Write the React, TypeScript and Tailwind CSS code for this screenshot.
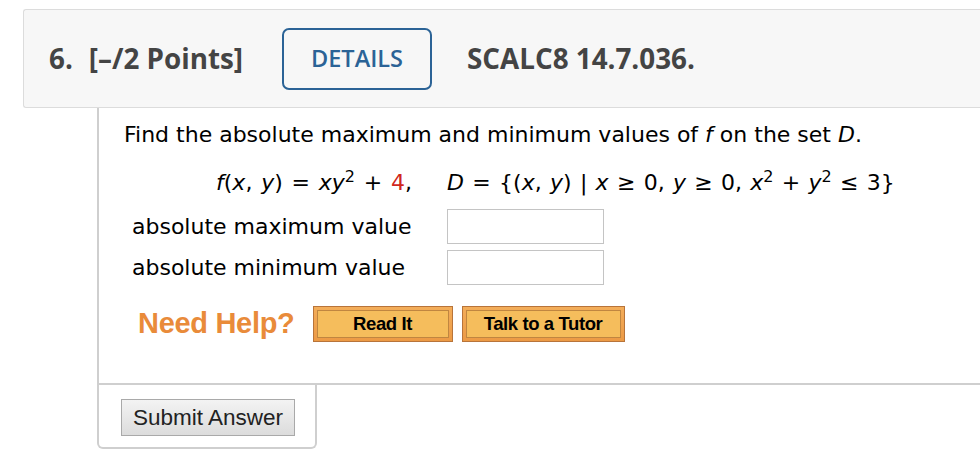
import React from "react";

const verdana = { fontFamily: '"DejaVu Sans", Verdana, sans-serif' };

function OrangeButton({ label, width }: { label: string; width: string }) {
  return (
    <div className={`h-[36px] ${width} border border-[#b8743a] bg-gradient-to-b from-[#f3ad5a] to-[#ec9a45] p-[3px]`}>
      <div className="flex h-full w-full items-center justify-center border border-[#c08640] bg-[#f5bd5c] font-['Liberation_Sans',Arial,sans-serif] text-[18.5px] font-bold tracking-[-0.4px] text-black">
        {label}
      </div>
    </div>
  );
}

export default function App() {
  return (
    <div className="h-[460px] w-[980px] overflow-hidden bg-white">
      {/* Header */}
      <div className="ml-[23px] mt-[9px] flex h-[99px] items-center rounded-l-[3px] border border-r-0 border-[#dcdcdc] bg-[#f7f7f7] pl-[25px] font-['Open_Sans',sans-serif] font-bold text-[#444]">
        <span className="text-[27.8px]">6.</span>
        <span className="ml-[16px] text-[27.8px]">[–/2 Points]</span>
        <div className="ml-[39px] flex h-[62px] w-[150px] items-center justify-center rounded-[7px] border-2 border-[#2b6396] text-[23.5px] font-semibold text-[#2b6396]">
          DETAILS
        </div>
        <span className="ml-[35px] text-[27.8px]">SCALC8 14.7.036.</span>
      </div>

      {/* Content */}
      <div className="ml-[97px]">
        <div className="h-[277px] border-b-2 border-l-2 border-[#cfcfcf] pl-[25px] pt-[13px] text-[22px] text-black" style={verdana}>
          <div className="leading-[28px]">
            Find the absolute maximum and minimum values of <i>f</i> on the set <i>D</i>.
          </div>
          <div className="mt-[20px] pl-[92px] leading-[28px] [word-spacing:1.8px]">
            <i>f</i>(<i>x</i>, <i>y</i>) = <i>xy</i>
            <sup className="text-[16px]">2</sup> + <span className="text-[#d0281c]">4</span>,
            <span className="ml-[35px] [word-spacing:1.3px]">
              <i>D</i> = {"{"}(<i>x</i>, <i>y</i>) | <i>x</i> ≥ 0, <i>y</i> ≥ 0, <i>x</i>
              <sup className="text-[16px]">2</sup> + <i>y</i>
              <sup className="text-[16px]">2</sup> ≤ 3{"}"}
            </span>
          </div>
          <div className="mt-[12px] flex flex-col gap-[6px] pl-[8px]">
            <div className="flex items-center">
              <span className="w-[315px] leading-[28px]">absolute maximum value</span>
              <div className="h-[35px] w-[157px] border border-[#c4c4c4] bg-white" />
            </div>
            <div className="flex items-center">
              <span className="w-[315px] leading-[28px]">absolute minimum value</span>
              <div className="h-[35px] w-[157px] border border-[#c4c4c4] bg-white" />
            </div>
          </div>
          <div className="mt-[17px] flex items-center pl-[14px]">
            <span className="font-['Liberation_Sans',Arial,sans-serif] text-[29px] font-bold tracking-[-0.3px] text-[#e98b3a]">
              Need Help?
            </span>
            <div className="ml-[18px]">
              <OrangeButton label="Read It" width="w-[140px]" />
            </div>
            <div className="ml-[9px]">
              <OrangeButton label="Talk to a Tutor" width="w-[163px]" />
            </div>
          </div>
        </div>
        <div className="h-[64px] w-[220px] rounded-b-[6px] border-x-2 border-b-2 border-[#cfcfcf] pl-[22px] pt-[14px]">
          <div className="flex h-[37px] w-[174px] items-center justify-center border border-[#a9a9a9] bg-gradient-to-b from-[#f3f3f3] to-[#dcdcdc] font-['Liberation_Sans',Arial,sans-serif] text-[22.5px] text-[#222]">
            Submit Answer
          </div>
        </div>
      </div>
    </div>
  );
}
